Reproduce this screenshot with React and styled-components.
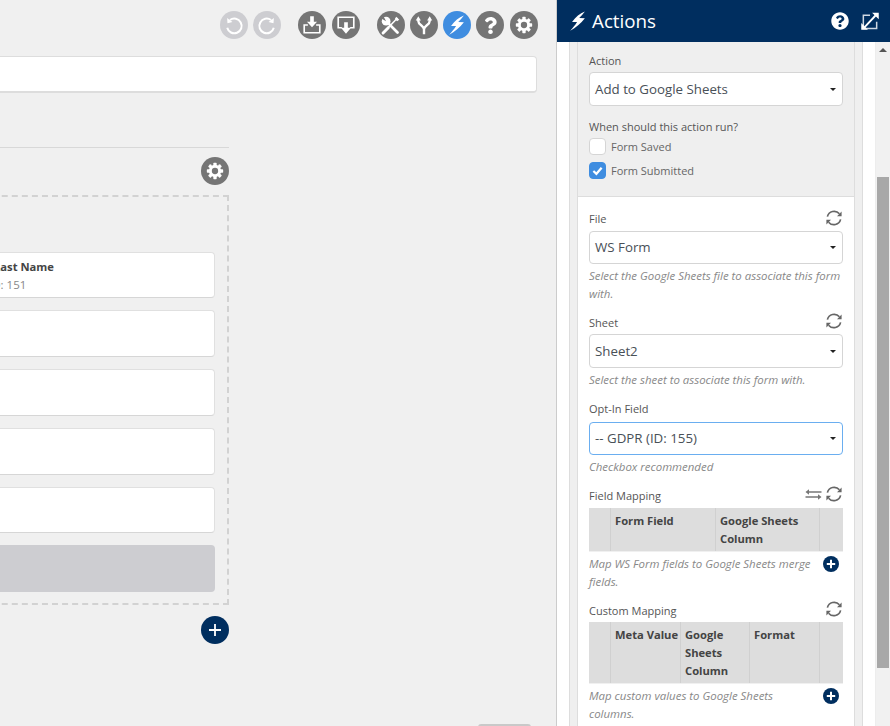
import React from 'react';
import styled, { createGlobalStyle } from 'styled-components';
import { FaQuestion, FaQuestionCircle } from 'react-icons/fa';

const GlobalStyle = createGlobalStyle`
  html, body {
    margin: 0;
    padding: 0;
    height: 100%;
    overflow: hidden;
    background: #f0f0f0;
    font-family: "Open Sans", "Liberation Sans", sans-serif;
    color: #555;
  }
`;

const Page = styled.div`
  display: flex;
  width: 890px;
  height: 726px;
  overflow: hidden;
`;

/* left side: form builder, scrolled sideways so its left part is cut off */
const Main = styled.main`
  width: 557px;
  height: 726px;
  flex: none;
  overflow: hidden;
  box-sizing: border-box;
  padding: 11px 18.5px 0 0;
  border-right: 1px solid #ccc;
  background: #f0f0f0;
`;

const Toolbar = styled.div`
  display: flex;
  justify-content: flex-end;
  gap: 17px;
`;

const ToolGroup = styled.div`
  display: flex;
  gap: 5.25px;
`;

const RoundButton = styled.div`
  width: 28px;
  height: 28px;
  flex: none;
  border-radius: 50%;
  display: flex;
  align-items: center;
  justify-content: center;
  color: #fff;
  background: ${(p) => p.$bg || '#757575'};
`;

const TitleInput = styled.div`
  height: 37px;
  margin: 17px 0.5px 0 -20px;
  box-sizing: border-box;
  background: #fff;
  border: 1px solid #ddd;
  border-bottom-width: 2px;
  border-radius: 4px;
`;

const FormColumn = styled.div`
  width: 529px;
  margin: 54px 0 0 -300px;
`;

const Divider = styled.div`
  height: 1px;
  background: #d8d8d8;
`;

const GearRow = styled.div`
  display: flex;
  justify-content: flex-end;
  margin-top: 9px;
`;

const DashedBox = styled.div`
  margin-top: 10px;
  height: 410px;
  box-sizing: border-box;
  padding: 54.6px 12px 0 0;
  border: 2px dashed #d2d2d2;
  display: flex;
  flex-direction: column;
  gap: 12px;
`;

const Field = styled.div`
  height: 46.75px;
  flex: none;
  box-sizing: border-box;
  padding: 5px 0 0 291px;
  background: #fff;
  border: 1px solid #e0e0e0;
  border-bottom: 1px solid #d6d6d6;
  border-radius: 4px;
`;

const FieldName = styled.div`
  font-size: 11.2px;
  font-weight: 700;
  line-height: 18px;
  color: #444;
`;

const FieldId = styled.div`
  font-size: 11.5px;
  line-height: 18px;
  color: #888;
  margin-left: -5px;
`;

const SubmitBlock = styled.div`
  height: 47px;
  flex: none;
  background: #cdcdd1;
  border-radius: 4px;
`;

const AddRow = styled.div`
  display: flex;
  justify-content: flex-end;
  margin-top: 11px;
`;

const BottomTab = styled.div`
  width: 53px;
  height: 6px;
  margin: 80px 0 0 478px;
  background: #c9c9c9;
  border-radius: 3px 3px 0 0;
`;

/* right side: actions panel */
const Panel = styled.aside`
  width: 333px;
  height: 726px;
  flex: none;
  display: flex;
  flex-direction: column;
  background: #fff;
`;

const PanelHeader = styled.header`
  height: 42px;
  flex: none;
  display: flex;
  align-items: center;
  padding: 0 10px 0 10px;
  background: #002e5f;
  color: #fff;
`;

const PanelTitle = styled.h2`
  flex: 1;
  margin: 0 0 0 3px;
  font-size: 18.8px;
  font-weight: 400;
  line-height: 28px;
`;

const HeaderIcons = styled.div`
  display: flex;
  align-items: center;
  gap: 11px;
`;

const PanelBody = styled.div`
  flex: 1;
  min-height: 0;
  display: flex;
`;

const ScrollArea = styled.div`
  flex: 1;
  overflow: hidden;
  padding: 0 12px;
`;

const Gutter = styled.div`
  box-sizing: border-box;
  height: 100%;
  padding: 0 7px;
  background: #efefef;
  border-left: 1px solid #ddd;
  border-right: 1px solid #ddd;
`;

const Card = styled.div`
  box-sizing: border-box;
  height: 100%;
  background: #fff;
  border-left: 1px solid #ddd;
  border-right: 1px solid #ddd;
`;

const GreySection = styled.section`
  padding: 10px 11px 17px;
  background: #efefef;
  border-bottom: 1px solid #ddd;
`;

const WhiteSection = styled.section`
  padding: 14px 11px 0;
`;

const Label = styled.div`
  font-size: 11px;
  line-height: 18px;
  color: #555;
  margin-top: ${(p) => p.$top ?? 0}px;
  margin-bottom: 2px;
`;

const LabelRow = styled.div`
  display: flex;
  justify-content: space-between;
  align-items: center;
  box-sizing: border-box;
  height: 18px;
  padding-bottom: 2px;
  margin-bottom: ${(p) => p.$gap ?? 2}px;
  font-size: 11px;
  color: #555;
`;

const LabelIcons = styled.div`
  display: flex;
  align-items: center;
  gap: 3px;
  margin-top: -2px;
`;

const Select = styled.div`
  position: relative;
  height: 33.5px;
  box-sizing: border-box;
  padding: 0 5px;
  display: flex;
  align-items: center;
  font-size: 13.3px;
  color: #495057;
  background: #fff;
  border: 1px solid ${(p) => (p.$focus ? '#6aaef0' : '#d5d5d5')};
  border-radius: 4px;

  &::after {
    content: '';
    position: absolute;
    right: 6px;
    top: 50%;
    margin-top: -1px;
    border-left: 3px solid transparent;
    border-right: 3px solid transparent;
    border-top: 3px solid #222;
  }
`;

const Hint = styled.div`
  margin-top: 3px;
  font-size: 11.45px;
  font-style: italic;
  line-height: 18px;
  color: #888;
`;

const Group = styled.div`
  margin-bottom: ${(p) => p.$gap ?? 12}px;
`;

const CheckRow = styled.div`
  display: flex;
  align-items: center;
  gap: 5px;
  height: 17px;
  margin-bottom: 7px;
  font-size: 11px;
  color: #666;

  &:last-child {
    margin-bottom: 0;
  }
`;

const CheckBox = styled.div`
  width: 17px;
  height: 17px;
  box-sizing: border-box;
  display: flex;
  align-items: center;
  justify-content: center;
  border-radius: 4px;
  background: ${(p) => (p.$checked ? '#3f8de0' : '#fff')};
  border: 1px solid ${(p) => (p.$checked ? '#3f8de0' : '#d5d5d5')};
`;

const MapTable = styled.div`
  display: grid;
  grid-template-columns: ${(p) => p.$cols};
  background: #ddd;
  border-bottom: 1px solid #f0f0f0;
`;

const MapCell = styled.div`
  padding: 4px 0 3px 4px;
  font-size: 11.2px;
  font-weight: 700;
  line-height: 18px;
  color: #444;
  border-left: 1px solid #d0d0d0;

  &:first-child {
    border-left: 0;
  }
`;

const HintRow = styled.div`
  display: flex;
  justify-content: space-between;
  align-items: flex-start;
  padding-right: 4px;
`;

const HintAdd = styled.div`
  margin-top: 4px;
  flex: none;
  display: flex;
`;

const ScrollBar = styled.div`
  position: relative;
  width: 15px;
  flex: none;
  box-sizing: border-box;
  padding: 135px 1px 0 1px;
  background: #f1f1f1;
  border-left: 1px solid #ededed;

  &::before {
    content: '';
    position: absolute;
    left: 3px;
    top: 6px;
    border-left: 4px solid transparent;
    border-right: 4px solid transparent;
    border-bottom: 4px solid #555;
  }
`;

const ScrollThumb = styled.div`
  height: 491px;
  background: #a8a8a8;
`;

/* icons */
const Svg = ({ size = 18, box = 24, children, ...rest }) => (
  <svg width={size} height={size} viewBox={`0 0 ${box} ${box}`} {...rest}>
    {children}
  </svg>
);

const BoltIcon = ({ size }) => (
  <Svg size={size}>
    <path
      fill="currentColor"
      d="M19.5 1.5C14 3.5 9.5 7.5 5.5 13l5.5.2C9 16.3 6.6 19.4 3.5 22.5c6.2-3.2 11.6-8 16-13.5l-6.2-.2c2-2.3 4.3-4.8 6.2-7.3z"
    />
  </Svg>
);

const UndoIcon = ({ flip }) => (
  <Svg size={22} style={flip ? { transform: 'scaleX(-1)' } : undefined}>
    <path
      d="M7.6 6.6A8 8 0 1 1 4.6 15"
      fill="none"
      stroke="currentColor"
      strokeWidth="2.2"
    />
    <path d="M4.5 4.4l.4 5.6 5.4-1.2z" fill="currentColor" />
  </Svg>
);

const ImportIcon = () => (
  <Svg size={22}>
    <path d="M10 2.5h4v6h3.5L12 14.5 6.5 8.5H10z" fill="currentColor" />
    <path
      d="M7.5 12H3.5v8.5h17V12h-4"
      fill="none"
      stroke="currentColor"
      strokeWidth="1.8"
    />
  </Svg>
);

const ExportIcon = () => (
  <Svg size={22}>
    <path
      d="M7.5 15H3.5V3.5h17V15h-4"
      fill="none"
      stroke="currentColor"
      strokeWidth="1.8"
    />
    <path d="M10 9h4v6h3.5L12 21.5 6.5 15H10z" fill="currentColor" />
  </Svg>
);

const ToolsIcon = () => (
  <Svg size={21}>
    <path d="M9 9l11 11" stroke="#fff" strokeWidth="3.2" strokeLinecap="round" />
    <circle cx="7" cy="7" r="5" fill="#fff" />
    <path d="M7 7L3.5 0.5 0.5 3.5z" fill="#757575" />
    <path d="M20 3.5L4.5 19.5" stroke="#fff" strokeWidth="1.8" />
    <path d="M9.5 14.5L3.5 20.5" stroke="#fff" strokeWidth="3.4" strokeLinecap="round" />
    <path d="M18.5 2l3.5 3.5-2.5 1.5-2.5-2.5z" fill="#fff" />
  </Svg>
);

const ForkIcon = () => (
  <Svg size={22}>
    <path
      d="M5.8 5.5v2c0 5 6.2 4.5 6.2 9.5v5M18.2 5.5v2c0 5-6.2 4.5-6.2 9.5"
      fill="none"
      stroke="currentColor"
      strokeWidth="2.6"
    />
    <path d="M5.8 2.5L3 7h5.6zM18.2 2.5L15.4 7H21z" fill="currentColor" />
  </Svg>
);

const GearIcon = () => (
  <Svg size={20}>
    {[0, 45, 90, 135, 180, 225, 270, 315].map((deg) => (
      <rect
        key={deg}
        x="10"
        y="2.2"
        width="4"
        height="4"
        rx="0.8"
        fill="#fff"
        transform={`rotate(${deg} 12 12)`}
      />
    ))}
    <circle cx="12" cy="12" r="7.4" fill="#fff" />
    <circle cx="12" cy="12" r="3.8" fill="#757575" />
  </Svg>
);

const ExpandIcon = () => (
  <Svg size={20}>
    <path
      d="M12 4H4v16h16v-8"
      fill="none"
      stroke="#cfd8e3"
      strokeWidth="1.8"
      transform="translate(0 1)"
    />
    <path d="M5 20L19.5 4.5" fill="none" stroke="#fff" strokeWidth="2.2" />
    <path d="M14.5 2h8v8zM1.5 22.5v-8l8 8z" fill="#fff" />
  </Svg>
);

const RefreshIcon = () => (
  <Svg size={18} box={18}>
    <path
      d="M2.4 7.6A6.9 6.9 0 0 1 14.4 4.8M15.6 10.4A6.9 6.9 0 0 1 3.6 13.2"
      fill="none"
      stroke="#666"
      strokeWidth="1.7"
    />
    <path d="M16.6 2.6v4.6h-4.6zM1.4 15.4v-4.6H6z" fill="#666" />
  </Svg>
);

const SwapIcon = () => (
  <Svg size={17} box={17}>
    <path d="M3 6h13.5M0.5 11H14" fill="none" stroke="#777" strokeWidth="1.5" />
    <path d="M0.5 6L4 3.2v5.6zM16.5 11L13 8.2v5.6z" fill="#777" />
  </Svg>
);

const PlusDot = () => (
  <Svg size={16} box={16}>
    <circle cx="8" cy="8" r="8" fill="#002e5f" />
    <path d="M8 3.8v8.4M3.8 8h8.4" stroke="#fff" strokeWidth="2" />
  </Svg>
);

const PlusIcon = () => (
  <Svg size={14} box={14}>
    <path d="M7 1v12M1 7h12" stroke="#fff" strokeWidth="1.8" />
  </Svg>
);

const CheckIcon = () => (
  <Svg size={11} box={12}>
    <path d="M1.5 6.5L4.8 9.6 10.5 3" fill="none" stroke="#fff" strokeWidth="2.4" />
  </Svg>
);

const builderFields = [1, 2, 3, 4];

const App = () => {
  return (
    <>
      <GlobalStyle />
      <Page>
        <Main>
          <Toolbar>
            <ToolGroup>
              <RoundButton $bg="#cdcdd1"><UndoIcon /></RoundButton>
              <RoundButton $bg="#cdcdd1"><UndoIcon flip /></RoundButton>
            </ToolGroup>
            <ToolGroup>
              <RoundButton><ImportIcon /></RoundButton>
              <RoundButton><ExportIcon /></RoundButton>
            </ToolGroup>
            <ToolGroup>
              <RoundButton><ToolsIcon /></RoundButton>
              <RoundButton><ForkIcon /></RoundButton>
              <RoundButton $bg="#3f8de0"><BoltIcon size={22} /></RoundButton>
              <RoundButton><FaQuestion size={17} /></RoundButton>
              <RoundButton><GearIcon /></RoundButton>
            </ToolGroup>
          </Toolbar>
          <TitleInput />
          <FormColumn>
            <Divider />
            <GearRow>
              <RoundButton><GearIcon /></RoundButton>
            </GearRow>
            <DashedBox>
              <Field>
                <FieldName>Last Name</FieldName>
                <FieldId>ID: 151</FieldId>
              </Field>
              {builderFields.map((id) => (
                <Field key={id} />
              ))}
              <SubmitBlock />
            </DashedBox>
            <AddRow>
              <RoundButton $bg="#002e5f"><PlusIcon /></RoundButton>
            </AddRow>
          </FormColumn>
          <BottomTab />
        </Main>
        <Panel>
          <PanelHeader>
            <BoltIcon size={22} />
            <PanelTitle>Actions</PanelTitle>
            <HeaderIcons>
              <FaQuestionCircle size={18} />
              <ExpandIcon />
            </HeaderIcons>
          </PanelHeader>
          <PanelBody>
            <ScrollArea>
              <Gutter>
                <Card>
                  <GreySection>
                    <Label>Action</Label>
                    <Select>Add to Google Sheets</Select>
                    <Label $top={12}>When should this action run?</Label>
                    <CheckRow>
                      <CheckBox />
                      Form Saved
                    </CheckRow>
                    <CheckRow>
                      <CheckBox $checked><CheckIcon /></CheckBox>
                      Form Submitted
                    </CheckRow>
                  </GreySection>
                  <WhiteSection>
                    <Group $gap={11}>
                      <LabelRow>
                        File
                        <LabelIcons><RefreshIcon /></LabelIcons>
                      </LabelRow>
                      <Select>WS Form</Select>
                      <Hint>Select the Google Sheets file to associate this form with.</Hint>
                    </Group>
                    <Group>
                      <LabelRow>
                        Sheet
                        <LabelIcons><RefreshIcon /></LabelIcons>
                      </LabelRow>
                      <Select>Sheet2</Select>
                      <Hint>Select the sheet to associate this form with.</Hint>
                    </Group>
                    <Group $gap={11}>
                      <LabelRow $gap={3}>Opt-In Field</LabelRow>
                      <Select $focus>-- GDPR (ID: 155)</Select>
                      <Hint>Checkbox recommended</Hint>
                    </Group>
                    <Group $gap={11}>
                      <LabelRow $gap={3}>
                        Field Mapping
                        <LabelIcons>
                          <SwapIcon />
                          <RefreshIcon />
                        </LabelIcons>
                      </LabelRow>
                      <MapTable $cols="21px 105px 104px 24px">
                        <MapCell />
                        <MapCell>Form Field</MapCell>
                        <MapCell>Google Sheets Column</MapCell>
                        <MapCell />
                      </MapTable>
                      <HintRow>
                        <Hint>
                          Map WS Form fields to Google Sheets merge
                          <br />
                          fields.
                        </Hint>
                        <HintAdd><PlusDot /></HintAdd>
                      </HintRow>
                    </Group>
                    <Group>
                      <LabelRow>
                        Custom Mapping
                        <LabelIcons><RefreshIcon /></LabelIcons>
                      </LabelRow>
                      <MapTable $cols="21px 70px 69px 70px 24px">
                        <MapCell />
                        <MapCell>Meta Value</MapCell>
                        <MapCell>Google Sheets Column</MapCell>
                        <MapCell>Format</MapCell>
                        <MapCell />
                      </MapTable>
                      <HintRow>
                        <Hint>
                          Map custom values to Google Sheets
                          <br />
                          columns.
                        </Hint>
                        <HintAdd><PlusDot /></HintAdd>
                      </HintRow>
                    </Group>
                  </WhiteSection>
                </Card>
              </Gutter>
            </ScrollArea>
            <ScrollBar>
              <ScrollThumb />
            </ScrollBar>
          </PanelBody>
        </Panel>
      </Page>
    </>
  );
};

export default App;
